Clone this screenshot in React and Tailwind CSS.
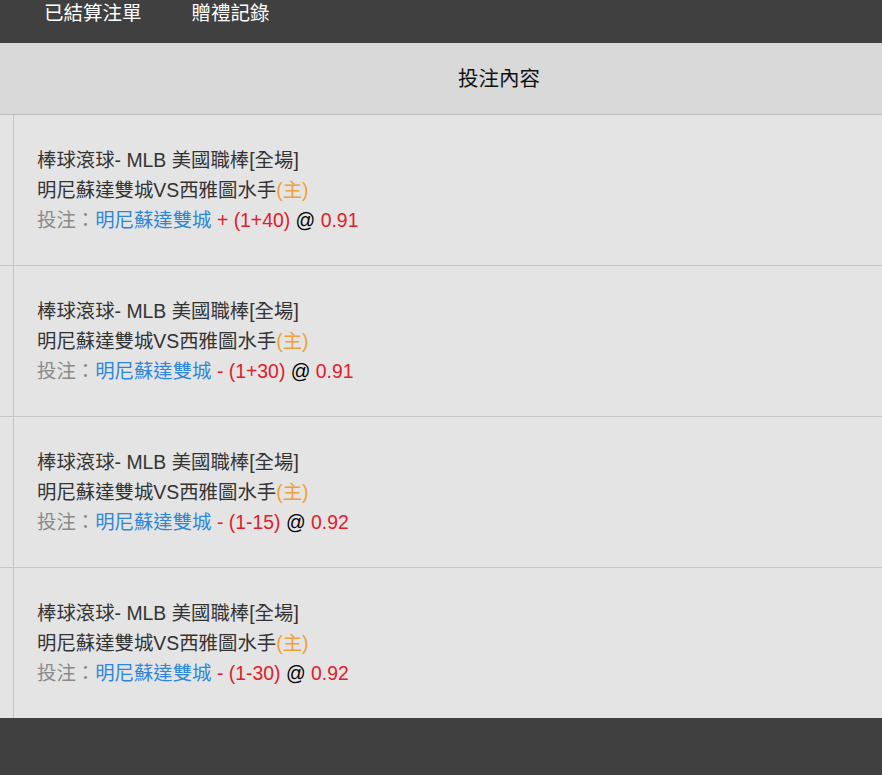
const bets = [
  { sign: "+", line: "(1+40)", odds: "0.91" },
  { sign: "-", line: "(1+30)", odds: "0.91" },
  { sign: "-", line: "(1-15)", odds: "0.92" },
  { sign: "-", line: "(1-30)", odds: "0.92" },
];

const font = { fontFamily: '"Liberation Sans", Arial, "Noto Sans CJK TC", sans-serif' };

export default function App() {
  return (
    <div className="w-[882px] h-[775px] overflow-hidden bg-[#e4e4e4] flex flex-col" style={font}>
      {/* top tabs */}
      <div className="h-[43px] shrink-0 bg-[#404040] flex items-start pl-[44px] gap-[50px] text-white text-[19.5px] leading-[26px]">
        <span>已結算注單</span>
        <span>贈禮記錄</span>
      </div>

      {/* table */}
      <div className="flex-1 overflow-hidden">
        <div className="w-[984px]">
          <div className="h-[72px] bg-[#d9d9d9] border-b border-[#bdbdbd] flex">
            <div className="w-[14px] shrink-0" />
            <div className="flex-1 flex items-center justify-center text-[20.5px] text-[#111] pt-[2px]">
              投注內容
            </div>
          </div>
          {bets.map((b, i) => (
            <div key={i} className="h-[151px] flex border-b border-[#c4c4c4]">
              <div className="w-[14px] shrink-0 border-r border-[#c4c4c4]" />
              <div className="flex-1 pl-[23px] pt-[30px] text-[19.4px] leading-[30px] text-[#333]">
                <div>棒球滾球- MLB 美國職棒[全場]</div>
                <div>
                  明尼蘇達雙城VS西雅圖水手<span className="text-[#f0a03c]">(主)</span>
                </div>
                <div className="text-[#8a8a8a]">
                  投注：<span className="text-[#2f86d8]">明尼蘇達雙城</span>{" "}
                  <span className="text-[#e0202a]">
                    {b.sign} {b.line}
                  </span>{" "}
                  <span className="text-black">@</span>{" "}
                  <span className="text-[#e0202a]">{b.odds}</span>
                </div>
              </div>
            </div>
          ))}
        </div>
      </div>

      {/* bottom bar */}
      <div className="h-[57px] shrink-0 bg-[#404040]" />
    </div>
  );
}
